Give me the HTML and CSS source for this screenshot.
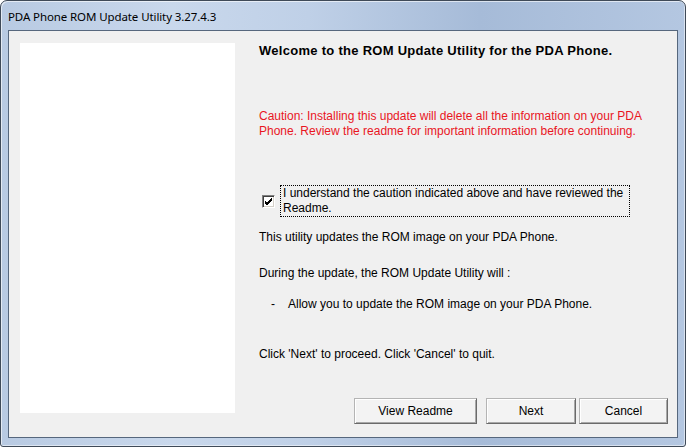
FILE: index.html
```html
<!DOCTYPE html>
<html>
<head>
<meta charset="utf-8">
<link rel="stylesheet" href="styles.css">
</head>
<body>
<div class="window">
  <div class="titlebar">PDA Phone ROM Update Utility 3.27.4.3</div>
  <div class="client">
    <div class="side-panel"></div>
    <div class="main">
      <h1 class="heading">Welcome to the ROM Update Utility for the PDA Phone.</h1>
      <p class="caution">Caution: Installing this update will delete all the information on your PDA Phone. Review the readme for important information before continuing.</p>
      <div class="check-row">
        <span class="checkbox">
          <svg width="9" height="9" viewBox="0 0 9 9"><path d="M1 4 L3 6 L8 1 M1 5 L3 7 L8 2 M1 6 L3 8 L8 3" stroke="#000" stroke-width="1" fill="none"/></svg>
        </span>
        <span class="check-label">I understand the caution indicated above and have reviewed the Readme.</span>
      </div>
      <p class="text t1">This utility updates the ROM image on your PDA Phone.</p>
      <p class="text t2">During the update, the ROM Update Utility will :</p>
      <p class="text t3"><span class="dash">-</span><span>Allow you to update the ROM image on your PDA Phone.</span></p>
      <p class="text t4">Click 'Next' to proceed. Click 'Cancel' to quit.</p>
      <div class="buttons">
        <button class="btn btn-readme">View Readme</button>
        <button class="btn btn-next">Next</button>
        <button class="btn btn-cancel">Cancel</button>
      </div>
    </div>
  </div>
</div>
</body>
</html>
```
FILE: styles.css
```css
html, body {
  margin: 0;
  padding: 0;
  background: #ffffff;
}
.window {
  width: 686px;
  height: 447px;
  box-sizing: border-box;
  border: 1px solid #3f4a58;
  border-radius: 7px 7px 3px 3px;
  background: linear-gradient(to right, #b8cae2 0%, #c9d8ec 25%, #bfd0e7 45%, #a6bbd8 70%, #b4c7e1 100%);
  display: flex;
  flex-direction: column;
  overflow: hidden;
  box-shadow: inset 1px 1px 0 rgba(255,255,255,0.6), inset -1px -1px 0 rgba(255,255,255,0.5);
}
.titlebar {
  height: 29px;
  flex: none;
  box-sizing: border-box;
  padding: 8px 0 0 7px;
  font-family: "Noto Sans", "Open Sans", sans-serif;
  font-size: 11.5px;
  line-height: 16px;
  color: #000;
  letter-spacing: -0.1px;
}
.client {
  flex: none;
  height: 408px;
  margin: 0 7px;
  box-sizing: border-box;
  border: 1px solid #56677d;
  background: #f0f0f0;
  display: flex;
  padding: 12px 0 0 11px;
  font-family: "Liberation Sans", Arial, sans-serif;
  font-size: 12px;
  color: #000;
}
.side-panel {
  flex: none;
  width: 215px;
  height: 370px;
  background: #ffffff;
}
.main {
  flex: 1;
  margin-left: 24px;
  display: flex;
  flex-direction: column;
}
.heading {
  margin: 0;
  font-size: 13px;
  font-weight: bold;
  line-height: 16px;
  letter-spacing: 0.28px;
}
.caution {
  margin: 50px 0 0 0;
  width: 400px;
  color: #e9161f;
  line-height: 15px;
}
.check-row {
  display: flex;
  align-items: flex-start;
  margin-top: 46px;
  margin-left: 3px;
}
.checkbox {
  flex: none;
  width: 13px;
  height: 13px;
  box-sizing: border-box;
  margin-top: 10px;
  border: 1px solid;
  border-color: #808080 #ffffff #ffffff #808080;
  box-shadow: inset 1px 1px 0 #404040, inset -1px -1px 0 #d4d0c8;
  background: #ffffff;
  display: flex;
  align-items: center;
  justify-content: center;
}
.checkbox svg {
  display: block;
}
.check-label {
  margin-left: 5px;
  width: 346px;
  border: 1px dotted #000;
  line-height: 15px;
  padding: 0 0 0 2px;
}
.text {
  margin: 0;
  line-height: 15px;
}
.t1 { margin-top: 13px; }
.t2 { margin-top: 21px; }
.t3 { margin-top: 16px; display: flex; }
.t3 .dash { width: 17px; margin-left: 12px; }
.t4 { margin-top: 35px; }
.buttons {
  display: flex;
  justify-content: flex-end;
  margin-top: 36px;
  padding-right: 9px;
}
.btn {
  height: 26px;
  box-sizing: border-box;
  font-family: "Liberation Sans", Arial, sans-serif;
  font-size: 12px;
  color: #000;
  background: #f3f3f3;
  border: 1px solid;
  border-color: #b4b4b4 #6a6a6a #6a6a6a #b4b4b4;
  box-shadow: inset 1px 1px 0 #ffffff, inset -1px -1px 0 #a8a8a8;
  padding: 0;
}
.btn-readme { width: 123px; }
.btn-next { width: 90px; margin-left: 9px; }
.btn-cancel { width: 89px; margin-left: 3px; }
```
